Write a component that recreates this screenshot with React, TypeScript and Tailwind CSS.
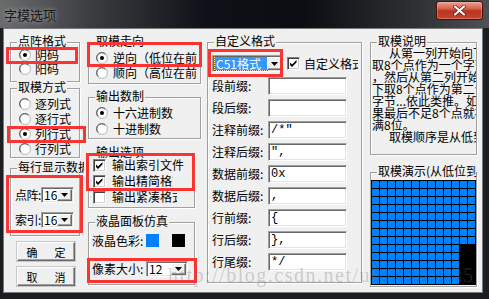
import React from 'react';

function Radio({ checked }: { checked?: boolean }) {
  return (
    <svg width="12" height="12" viewBox="0 0 12 12" className="shrink-0">
      <circle cx="6" cy="6" r="5.5" fill="#fff" stroke="#9a9a9a" />
      <path d="M2.2 9.2 A4.6 4.6 0 0 1 9.2 2.2" fill="none" stroke="#505050" strokeWidth="1" />
      <path d="M9.8 2.8 A4.6 4.6 0 0 1 2.8 9.8" fill="none" stroke="#e3e3e3" strokeWidth="1" />
      {checked && <circle cx="6" cy="6" r="2" fill="#000" />}
    </svg>
  );
}

function CheckBox({ checked }: { checked?: boolean }) {
  return (
    <span className="flex h-[13px] w-[13px] shrink-0 items-center justify-center border border-b-white border-l-[#808080] border-r-white border-t-[#808080] bg-white shadow-[inset_1px_1px_0_#404040,inset_-1px_-1px_0_#d4d0c8]">
      {checked && (
        <svg width="11" height="11" viewBox="0 0 11 11">
          <path d="M2 4.5 L4 6.5 L8.5 2 L8.5 4.5 L4 9 L2 7 Z" fill="#000" />
        </svg>
      )}
    </span>
  );
}

function DropButton() {
  return (
    <span className="flex h-full w-[15px] shrink-0 items-center justify-center border border-b-[#696969] border-l-white border-r-[#696969] border-t-white bg-[#f0f0f0] shadow-[inset_-1px_-1px_0_#a0a0a0]">
      <svg width="7" height="4" viewBox="0 0 7 4">
        <path d="M0 0 H7 L3.5 4 Z" fill="#000" />
      </svg>
    </span>
  );
}

function Combo({ value, className }: { value: React.ReactNode; className: string }) {
  return (
    <div
      className={`flex shrink-0 items-stretch border border-b-white border-l-[#a0a0a0] border-r-white border-t-[#a0a0a0] bg-white p-[1px] shadow-[inset_1px_1px_0_#696969,inset_-1px_-1px_0_#e3e3e3] ${className}`}
    >
      <span className="flex flex-1 items-center whitespace-nowrap pl-[1px] leading-[12px]">{value}</span>
      <DropButton />
    </div>
  );
}

function Field({ value }: { value?: string }) {
  return (
    <div className="flex h-[18px] w-[79px] shrink-0 items-center border border-b-white border-l-[#a0a0a0] border-r-white border-t-[#a0a0a0] bg-white pl-[2px] font-['Liberation_Mono',monospace] text-[12px] leading-[12px] shadow-[inset_1px_1px_0_#696969,inset_-1px_-1px_0_#e3e3e3]">
      {value}
    </div>
  );
}

function Group({
  label,
  className,
  labelClass = '',
  children,
}: {
  label: string;
  className: string;
  labelClass?: string;
  children?: React.ReactNode;
}) {
  return (
    <div className={`relative border border-[#a0a0a0] shadow-[inset_1px_1px_0_#fff,1px_1px_0_#fff] ${className}`}>
      <span className={`absolute -top-[9px] left-[6px] whitespace-nowrap bg-[#f0f0f0] px-[1px] leading-[14px] ${labelClass}`}>
        {label}
      </span>
      {children}
    </div>
  );
}

function RadioRow({
  label,
  checked,
  className,
  textClass = '',
}: {
  label: string;
  checked?: boolean;
  className: string;
  textClass?: string;
}) {
  return (
    <div className={`flex items-center ${className}`}>
      <Radio checked={checked} />
      <span className={`whitespace-nowrap ${textClass}`}>{label}</span>
    </div>
  );
}

function CheckRow({ label, checked, textClass = '' }: { label: string; checked?: boolean; textClass?: string }) {
  return (
    <div className="flex h-[16px] items-center gap-[6px]">
      <CheckBox checked={checked} />
      <span className={`whitespace-nowrap ${textClass}`}>{label}</span>
    </div>
  );
}

function Button({ a, b }: { a: string; b: string }) {
  return (
    <div className="ml-[7px] mt-[6px] flex h-[19px] w-[58px] items-center justify-center gap-[17px] border border-b-[#696969] border-l-white border-r-[#696969] border-t-white bg-[#f0f0f0] text-[11px] leading-[12px] shadow-[inset_-1px_-1px_0_#a0a0a0,0_0_0_1px_#c8c8c8]">
      <span>{a}</span>
      <span>{b}</span>
    </div>
  );
}

const fields: [string, string][] = [
  ['段前缀:', ''],
  ['段后缀:', ''],
  ['注释前缀:', '/*"'],
  ['注释后缀:', '",'],
  ['数据前缀:', '0x'],
  ['数据后缀:', ','],
  ['行前缀:', '{'],
  ['行后缀:', '},'],
  ['行尾缀:', '*/'],
];

const notes = [
  { t: '从第一列开始向下', indent: true },
  { t: '取8个点作为一个字节' },
  { t: '，然后从第二列开始向' },
  { t: '下取8个点作为第二个' },
  { t: '字节...依此类推。如' },
  { t: '果最后不足8个点就补' },
  { t: '满8位。' },
  { t: '取模顺序是从低到高', indent: true },
];

const marks = [
  'left-[6px] top-[47px] w-[72px] h-[17px]',
  'left-[87px] top-[42px] w-[115px] h-[25px]',
  'left-[208px] top-[49px] w-[75px] h-[28px]',
  'left-[7px] top-[126px] w-[79px] h-[17px]',
  'left-[86px] top-[153px] w-[109px] h-[38px]',
  'left-[6px] top-[175px] w-[77px] h-[58px]',
  'left-[87px] top-[258px] w-[110px] h-[25px]',
];

export default function App() {
  const cells = Array.from({ length: 13 * 13 }, (_, i) => {
    const row = Math.floor(i / 13);
    const col = i % 13;
    return row < 8 || col < 11;
  });

  return (
    <div className="relative h-[299px] w-[489px] overflow-hidden bg-[#1d1e21] font-['Noto_Sans_CJK_SC',sans-serif] text-[12px] leading-[14px] text-black">
      {/* title bar */}
      <div className="flex h-[28px] items-start bg-[linear-gradient(90deg,#6b6c6e_0%,#3d3e41_18%,#0e1117_42%,#0b0d12_62%,#2f3033_85%,#505154_100%)]">
        <span className="ml-[4px] mt-[7px] text-[13px] leading-[16px] text-[#161616] [text-shadow:0_0_5px_rgba(255,255,255,0.6)]">
          字模选项
        </span>
        <div className="ml-auto mr-[6px] mt-[1px] flex h-[19px] w-[47px] items-center justify-center rounded-[3px] border border-[#4a0f08] bg-[linear-gradient(180deg,#eaa394_0%,#d6604a_40%,#b93420_52%,#c4452e_100%)] shadow-[inset_0_0_0_1px_rgba(255,200,190,0.35)]">
          <svg width="13" height="11" viewBox="0 0 13 11">
            <path d="M2 1.5 L11 9.5 M11 1.5 L2 9.5" stroke="#5a1a10" strokeWidth="3.6" strokeLinecap="round" />
            <path d="M2 1.5 L11 9.5 M11 1.5 L2 9.5" stroke="#fff" strokeWidth="2.2" strokeLinecap="round" />
          </svg>
        </div>
      </div>

      {/* dialog body */}
      <div className="ml-[3px] flex h-[265px] w-[480px] border border-[#7a7a7a] bg-[#f0f0f0] pl-[6px] pt-[13px]">
        {/* column 1 */}
        <div className="flex w-[70px] flex-col">
          <Group label="点阵格式" className="h-[40px] pl-[8px] pt-[5px]">
            <RadioRow checked label="阴码" className="h-[14px] gap-[4px]" />
            <RadioRow label="阳码" className="h-[14px] gap-[4px]" />
          </Group>
          <Group label="取模方式" className="mt-[6px] h-[70px] pl-[8px] pt-[7px]">
            <RadioRow label="逐列式" className="h-[15px] gap-[4px]" />
            <RadioRow label="逐行式" className="h-[15px] gap-[4px]" />
            <RadioRow checked label="列行式" className="h-[15px] gap-[4px]" />
            <RadioRow label="行列式" className="h-[15px] gap-[4px]" />
          </Group>
          <Group
            label="每行显示数据"
            labelClass="w-[67px] overflow-hidden"
            className="mt-[10px] flex h-[68px] flex-col gap-[9px] pl-[4px] pt-[18px]"
          >
            <div className="flex h-[16px] items-center">
              <span className="w-[26px] shrink-0 whitespace-nowrap tracking-[-0.5px]">点阵:</span>
              <Combo value="16" className="h-[16px] w-[33px]" />
            </div>
            <div className="flex h-[16px] items-center">
              <span className="w-[26px] shrink-0 whitespace-nowrap tracking-[-0.5px]">索引:</span>
              <Combo value="16" className="h-[16px] w-[33px]" />
            </div>
          </Group>
          <Button a="确" b="定" />
          <Button a="取" b="消" />
        </div>

        {/* column 2 */}
        <div className="ml-[8px] flex w-[113px] flex-col">
          <Group label="取模走向" className="h-[42px] pl-[7px] pt-[7px]">
            <RadioRow checked label="逆向（低位在前）" className="h-[15px] gap-[5px]" textClass="w-[84px] overflow-hidden" />
            <RadioRow label="顺向（高位在前）" className="h-[15px] gap-[5px]" textClass="w-[84px] overflow-hidden" />
          </Group>
          <Group label="输出数制" className="mt-[13px] h-[42px] pl-[7px] pt-[7px]">
            <RadioRow checked label="十六进制数" className="h-[16px] gap-[5px]" />
            <RadioRow label="十进制数" className="h-[16px] gap-[5px]" />
          </Group>
          <Group label="输出选项" className="mt-[14px] h-[55px] w-[107px] pl-[4px] pt-[3px]">
            <CheckRow checked label="输出索引文件" />
            <CheckRow checked label="输出精简格式" textClass="w-[61px] overflow-hidden" />
            <CheckRow label="输出紧凑格式" textClass="w-[65px] overflow-hidden" />
          </Group>
          <Group label="液晶面板仿真" className="mt-[14px] h-[63px] w-[107px] pl-[3px] pt-[11px]">
            <div className="flex h-[13px] items-center">
              <span className="w-[54px] shrink-0 whitespace-nowrap">液晶色彩:</span>
              <span className="h-[13px] w-[13px] bg-[#0080ff]" />
              <span className="ml-[13px] h-[13px] w-[13px] bg-black" />
            </div>
            <div className="mt-[14px] flex h-[16px] items-center">
              <span className="w-[54px] shrink-0 whitespace-nowrap">像素大小:</span>
              <Combo value="12" className="h-[16px] w-[42px]" />
            </div>
          </Group>
        </div>

        {/* column 3 */}
        <div className="ml-[6px] w-[155px]">
          <Group label="自定义格式" className="h-[241px] pl-[4px] pt-[12px]">
            <div className="flex h-[17px] items-center">
              <Combo
                value={
                  <span className="flex h-[13px] items-center bg-[#3399ff] pl-[1px] pr-[6px] text-white outline-1 outline-dotted outline-[#8a5a00]">
                    C51格式
                  </span>
                }
                className="h-[17px] w-[69px]"
              />
              <span className="ml-[6px]">
                <CheckBox checked />
              </span>
              <span className="ml-[4px] w-[54px] shrink-0 overflow-hidden whitespace-nowrap">自定义格式</span>
            </div>
            <div className="mt-[5px] flex flex-col gap-[4px]">
              {fields.map(([label, value]) => (
                <div key={label} className="flex h-[18px] items-center">
                  <span className="w-[56px] shrink-0 whitespace-nowrap">{label}</span>
                  <Field value={value} />
                </div>
              ))}
            </div>
          </Group>
        </div>

        {/* column 4 */}
        <div className="ml-[8px] flex w-[107px] flex-col">
          <Group label="取模说明" className="h-[113px]">
            <div className="h-full w-full overflow-hidden pl-[1px] pt-[4px] leading-[12px]">
              {notes.map((n, i) => (
                <div key={i} className={`whitespace-nowrap ${n.indent ? 'pl-[17px]' : ''}`}>
                  {n.t}
                </div>
              ))}
            </div>
          </Group>
          <Group
            label="取模演示(从低位到高位)"
            labelClass="w-[99px] overflow-hidden"
            className="mt-[17px] h-[115px] pt-[7px]"
          >
            <div className="grid h-[105px] w-[105px] grid-cols-[repeat(13,7px)] grid-rows-[repeat(13,7px)] gap-[1px] bg-black pl-[1px] pt-[1px]">
              {cells.map((on, i) => (
                <span key={i} className={on ? 'bg-[#0080ff]' : 'bg-black'} />
              ))}
            </div>
          </Group>
        </div>
      </div>

      {/* red annotation boxes */}
      {marks.map((m) => (
        <div key={m} className={`pointer-events-none absolute border-[3px] border-[#fa3333] ${m}`} />
      ))}

      {/* watermark */}
      <div className="pointer-events-none absolute left-[168px] top-[265px] whitespace-nowrap font-['Liberation_Serif',serif] text-[20px] leading-[20px] tracking-[1.5px] text-[rgba(110,110,110,0.3)]">
        http://blog.csdn.net/u013162035
      </div>
    </div>
  );
}
